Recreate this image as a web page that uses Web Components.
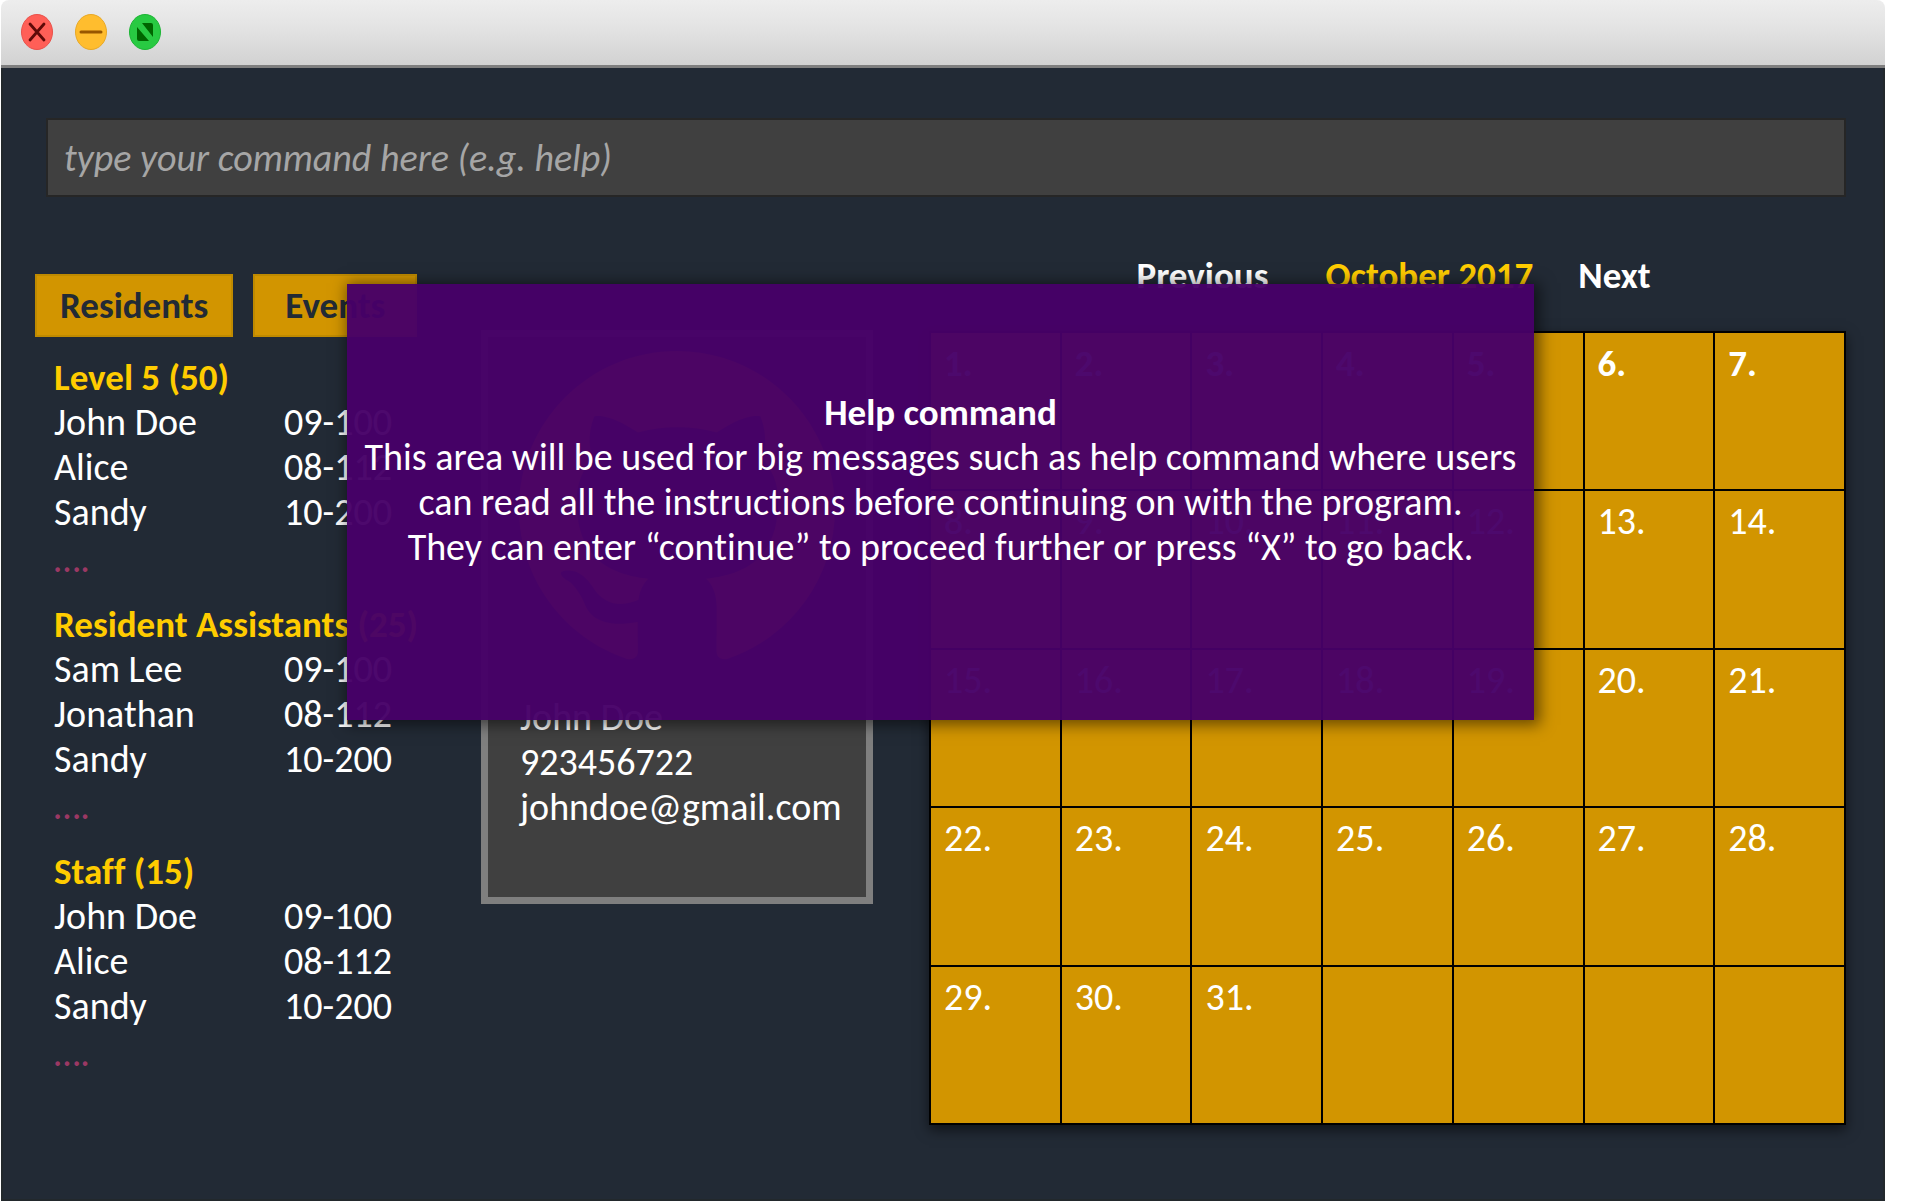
<!DOCTYPE html>
<html lang="en">
<head>
<meta charset="utf-8">
<title>Resident Manager</title>
<style>
  html, body { margin: 0; background: #fff; }
  body {
    --ink: #222a35;
    --amber: #d29500;
    --amber-edge: #bf8a00;
    --gold: #ffcc00;
    --panel: #404040;
    --strong: 700 37px/45px Carlito, Calibri, Lato, sans-serif;
    font: 38px/45px Carlito, Calibri, Lato, sans-serif;
    font-variant-ligatures: none;
    color: #fff;
  }
</style>
</head>
<body>
<app-window>
  <command-box></command-box>
  <work-space>
    <people-list slot="people"></people-list>
    <profile-card slot="profile" name="John Doe" phone="923456722" email="johndoe@gmail.com"></profile-card>
    <month-calendar slot="calendar" month="October 2017" days="31" cells="35"></month-calendar>
  </work-space>
  <help-dialog slot="dialog">
    <span slot="title">Help command</span>
    <p>This area will be used for big messages such as help command where users can read all the instructions before continuing on with the program.</p>
    <p>They can enter “continue” to proceed further or press “X” to go back.</p>
  </help-dialog>
</app-window>

<script>
const define = (name, html, setup) => {
  const template = document.createElement('template');
  template.innerHTML = html;
  customElements.define(name, class extends HTMLElement {
    connectedCallback() {
      if (this.shadowRoot) return;
      const root = this.attachShadow({ mode: 'open' });
      root.append(template.content.cloneNode(true));
      if (setup) setup(root, this);
    }
  });
};

define('window-controls', `
  <style>
    :host { display: flex; gap: 22px; }
    button { border: 0; padding: 0; background: none; width: 32px; height: 36px; }
    svg { display: block; width: 32px; height: 36px; }
  </style>
  <button aria-label="Close"><svg viewBox="0 0 32 36"><ellipse cx="16" cy="18" rx="15.5" ry="17.5" fill="#ff5f57" stroke="#e9514a"/><path d="M9 10l14 16M23 10L9 26" stroke="#5e0a08" stroke-width="2.8" stroke-linecap="round"/></svg></button>
  <button aria-label="Minimize"><svg viewBox="0 0 32 36"><ellipse cx="16" cy="18" rx="15.5" ry="17.5" fill="#ffbd2e" stroke="#e8a825"/><path d="M6 18h20" stroke="#985700" stroke-width="3" stroke-linecap="round"/></svg></button>
  <button aria-label="Zoom"><svg viewBox="0 0 32 36"><ellipse cx="16" cy="18" rx="15.5" ry="17.5" fill="#28ca42" stroke="#1cb534"/><path d="M13 9H22q2 0 2 2v12zM8 13v12q0 2 2 2h10z" fill="#006500"/></svg></button>
`);

define('app-window', `
  <style>
    :host { display: flex; flex-direction: column; position: relative; box-sizing: border-box; min-height: 100vh; margin: 0 29px 0 1px; }
    header { display: flex; align-items: center; box-sizing: border-box; height: 68px; padding: 0 20px 1px; border-bottom: 3px solid #7f7f7f; border-radius: 8px 8px 0 0; background: linear-gradient(#ededed, #e4e4e4 40%, #d2d2d2); }
    main { flex: 1; display: flex; flex-direction: column; background: var(--ink); border: solid #22282c; border-width: 0 2px 2px; padding: 50px 37px 70px 32px; }
  </style>
  <header><window-controls></window-controls></header>
  <main><slot></slot></main>
  <slot name="dialog"></slot>
`);

define('command-box', `
  <style>
    :host { display: block; margin-left: 11px; }
    input { display: block; box-sizing: border-box; width: 100%; height: 79px; padding: 0 16px; border: 2px solid #262626; border-radius: 0; background: var(--panel); color: #fff; font: inherit; font-style: italic; font-variant-ligatures: none; outline: 0; }
    input::placeholder { color: #a6a6a6; opacity: 1; }
  </style>
  <input type="text" aria-label="Command" placeholder="type your command here (e.g. help)">
`);

define('work-space', `
  <style>
    :host { display: grid; grid-template-columns: minmax(0, 390fr) minmax(0, 392fr) minmax(0, 917fr); column-gap: 56px; align-items: start; margin-top: 56px; }
    .people { padding-top: 21px; }
    .profile { padding-top: 77px; }
  </style>
  <div class="people"><slot name="people"></slot></div>
  <div class="profile"><slot name="profile"></slot></div>
  <div><slot name="calendar"></slot></div>
`);

define('tab-button', `
  <style>
    :host { display: block; }
    button { display: block; box-sizing: border-box; height: 63px; padding: 0 23px; border: 2px solid var(--amber-edge); background: var(--amber); color: var(--ink); font: var(--strong); white-space: nowrap; }
    :host([wide]) button { padding: 0 30px; }
  </style>
  <button><slot></slot></button>
`);

define('people-group', `
  <style>
    :host { display: block; }
    table { border-collapse: collapse; width: 100%; table-layout: fixed; }
    caption { text-align: left; font: var(--strong); font-variant-ligatures: none; color: var(--gold); white-space: nowrap; }
    td { padding: 0; }
    td:first-child { width: 62%; }
    p { margin: 0; padding-top: 2px; color: #9b3864; }
  </style>
  <table><caption></caption><tbody></tbody></table>
  <p>….</p>
`, (root, host) => {
  root.querySelector('caption').textContent = host.getAttribute('heading');
  const body = root.querySelector('tbody');
  for (const entry of host.getAttribute('people').split(';')) {
    const row = body.insertRow();
    for (const text of entry.split(',')) row.insertCell().textContent = text;
  }
});

define('people-list', `
  <style>
    :host { display: block; }
    nav { display: flex; gap: 20px; }
    .groups { display: flex; flex-direction: column; gap: 20px; padding: 18px 0 0 19px; }
  </style>
  <nav><tab-button>Residents</tab-button><tab-button wide>Events</tab-button></nav>
  <div class="groups">
    <people-group heading="Level 5 (50)" people="John Doe,09-100;Alice,08-112;Sandy,10-200"></people-group>
    <people-group heading="Resident Assistants (25)" people="Sam Lee,09-100;Jonathan,08-112;Sandy,10-200"></people-group>
    <people-group heading="Staff (15)" people="John Doe,09-100;Alice,08-112;Sandy,10-200"></people-group>
  </div>
`);

define('profile-card', `
  <style>
    :host { display: block; box-sizing: border-box; border: 7px solid #7f7f7f; background: var(--panel); padding: 14px 31px 67px; }
    svg { display: block; width: 100%; fill: var(--amber); }
    .details { padding: 28px 0 0 1px; }
    .details div { white-space: nowrap; }
  </style>
  <svg viewBox="0 0 16 16" role="img" aria-label="Profile picture"><path d="M8 0C3.580 0 0 3.580 0 8c0 3.540 2.290 6.530 5.470 7.590.4.070.55-.17.55-.38 0-.19-.01-.82-.01-1.490-2.010.37-2.530-.49-2.690-.94-.09-.23-.48-.94-.82-1.130-.28-.15-.68-.52-.01-.53.63-.01 1.080.58 1.230.82.72 1.210 1.870.87 2.330.66.07-.52.28-.87.51-1.070-1.780-.2-3.640-.89-3.640-3.950 0-.87.31-1.590.82-2.150-.08-.2-.36-1.020.08-2.120 0 0 .67-.21 2.200.82.64-.18 1.320-.27 2-.27s1.360.09 2 .27c1.530-1.040 2.200-.82 2.200-.82.44 1.100.16 1.920.08 2.120.51.56.82 1.270.82 2.150 0 3.070-1.870 3.750-3.650 3.950.29.25.54.73.54 1.480 0 1.070-.01 1.930-.01 2.200 0 .21.15.46.55.38A8.010 8.010 0 0 0 16 8c0-4.420-3.580-8-8-8z"/></svg>
  <div class="details"><div id="name"></div><div id="phone"></div><div id="email"></div></div>
`, (root, host) => {
  for (const key of ['name', 'phone', 'email']) root.getElementById(key).textContent = host.getAttribute(key);
});

define('month-calendar', `
  <style>
    :host { display: block; }
    nav { display: flex; justify-content: center; padding: 0 0 33px 12px; font: var(--strong); }
    button { border: 0; padding: 0; background: none; color: inherit; font: inherit; }
    .month { color: var(--gold); margin: 0 45px 0 57px; }
    table { width: 100%; height: 794px; table-layout: fixed; border-collapse: collapse; border: 2px solid #000; background: var(--amber); box-shadow: 0 5px 12px rgba(0, 0, 0, .55); }
    td { box-sizing: border-box; height: 158px; padding: 8px 0 0 13px; border: 2px solid #000; vertical-align: top; }
    tr:first-child td { font: var(--strong); }
  </style>
  <nav><button>Previous</button><span class="month"></span><button>Next</button></nav>
  <table><tbody></tbody></table>
`, (root, host) => {
  root.querySelector('.month').textContent = host.getAttribute('month');
  const days = Number(host.getAttribute('days'));
  const cells = Number(host.getAttribute('cells'));
  const body = root.querySelector('tbody');
  let row;
  for (let i = 0; i < cells; i++) {
    if (i % 7 === 0) row = body.insertRow();
    row.insertCell().textContent = i < days ? `${i + 1}.` : '';
  }
});

define('help-dialog', `
  <style>
    :host { display: block; position: absolute; top: 284px; left: 346px; right: 351px; box-sizing: border-box; min-height: 436px; padding: 106px 12px 0; background: rgba(70, 0, 104, .965); box-shadow: 3px 2px 14px 3px rgba(0, 0, 0, .5); text-align: center; }
    h2 { margin: 0; font: var(--strong); }
    ::slotted(p) { margin: 0; }
  </style>
  <h2><slot name="title"></slot></h2>
  <slot></slot>
`, (root, host) => host.setAttribute('role', 'dialog'));
</script>
</body>
</html>
